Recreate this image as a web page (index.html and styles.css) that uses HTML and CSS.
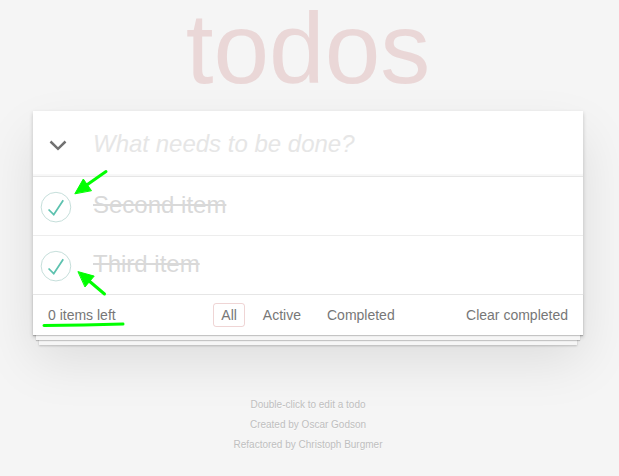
FILE: index.html
```html
<!DOCTYPE html>
<html lang="en">
<head>
<meta charset="utf-8">
<title>todos</title>
<link rel="stylesheet" href="styles.css">
</head>
<body>
<div class="page">
  <h1 class="title">todos</h1>
  <section class="todoapp">
    <header class="header">
      <span class="toggle-all"><svg width="18" height="11" viewBox="0 0 18 11"><polyline points="1.5,1.5 9,8.8 16.5,1.5" fill="none" stroke="#717171" stroke-width="2.5"/></svg></span>
      <input class="new-todo" placeholder="What needs to be done?">
    </header>
    <ul class="todo-list">
      <li class="todo completed">
        <svg class="toggle" width="40" height="40" viewBox="-10 -18 100 135"><circle cx="50" cy="50" r="50" fill="none" stroke="#bddad5" stroke-width="3"/><path fill="#5dc2af" d="M72 25L42 71 27 56l-4 4 20 20 34-52z"/></svg>
        <label class="todo-label">Second item</label>
      </li>
      <li class="todo completed">
        <svg class="toggle" width="40" height="40" viewBox="-10 -18 100 135"><circle cx="50" cy="50" r="50" fill="none" stroke="#bddad5" stroke-width="3"/><path fill="#5dc2af" d="M72 25L42 71 27 56l-4 4 20 20 34-52z"/></svg>
        <label class="todo-label">Third item</label>
      </li>
    </ul>
    <footer class="footer">
      <span class="todo-count">0 items left</span>
      <ul class="filters">
        <li><a class="filter selected">All</a></li>
        <li><a class="filter">Active</a></li>
        <li><a class="filter">Completed</a></li>
      </ul>
      <span class="clear-completed">Clear completed</span>
    </footer>
  </section>
  <footer class="info">
    <p>Double-click to edit a todo</p>
    <p>Created by Oscar Godson</p>
    <p>Refactored by Christoph Burgmer</p>
  </footer>
</div>
<svg class="annotations" width="619" height="476" viewBox="0 0 619 476">
  <g fill="#00ff00" stroke="#00ff00" stroke-linecap="round" stroke-linejoin="round">
    <line x1="106" y1="171.5" x2="86" y2="185.5" stroke-width="3"/>
    <polygon points="75,193.5 83.3,179 91.3,190.4" stroke-width="1"/>
    <line x1="104.5" y1="294" x2="88" y2="280" stroke-width="3"/>
    <polygon points="78.3,271.7 94.2,276.1 85.2,286.7" stroke-width="1"/>
    <path d="M44 325.5 Q 84 325 123 324" fill="none" stroke-width="3"/>
  </g>
</svg>
</body>
</html>
```

FILE: styles.css
```css
* {
  box-sizing: content-box;
}

html, body {
  margin: 0;
  padding: 0;
}

body {
  background: #f5f5f5;
  color: #4d4d4d;
  font: 14px "Liberation Sans", Arial, sans-serif;
  font-weight: 300;
  line-height: 1.4em;
  width: 619px;
  height: 476px;
  overflow: hidden;
}

.page {
  width: 550px;
  margin-left: 33px;
}

.title {
  margin: 0 0 15px 0;
  height: 96px;
  line-height: 96px;
  font-size: 100px;
  font-weight: 100;
  text-align: center;
  color: rgba(175, 47, 47, 0.15);
}

.todoapp {
  background: #fff;
  box-shadow: 0 2px 4px 0 rgba(0, 0, 0, 0.2), 0 25px 50px 0 rgba(0, 0, 0, 0.1);
}

.header {
  display: flex;
  align-items: center;
  height: 65px;
  box-shadow: inset 0 -2px 1px rgba(0, 0, 0, 0.03);
  border-bottom: 1px solid #e6e6e6;
}

.toggle-all {
  width: 44px;
  padding-left: 16px;
  display: flex;
  align-items: center;
  margin-top: 3px;
}

.toggle-all svg {
  display: block;
}

.new-todo {
  flex: 1;
  height: 65px;
  padding: 0 16px 0 0;
  margin: 0;
  border: none;
  outline: none;
  background: transparent;
  font: italic 300 24px "Liberation Sans", Arial, sans-serif;
  color: #4d4d4d;
}

.new-todo::placeholder {
  color: #e6e6e6;
  font-style: italic;
}

.todo-list {
  list-style: none;
  margin: 0;
  padding: 0;
}

.todo {
  display: flex;
  align-items: center;
  height: 58px;
  border-bottom: 1px solid #ededed;
}

.todo:last-child {
  border-bottom: none;
}

.toggle {
  display: block;
  flex: none;
  margin-top: 1px;
}

.todo-label {
  margin-left: 20px;
  padding-bottom: 2px;
  font-size: 24px;
  line-height: 28px;
  color: #d9d9d9;
  text-decoration: line-through;
}

.footer {
  display: grid;
  grid-template-columns: 1fr auto 1fr;
  align-items: center;
  height: 20px;
  line-height: 20px;
  padding: 10px 15px;
  color: #777;
  border-top: 1px solid #e6e6e6;
  box-shadow: 0 1px 1px rgba(0, 0, 0, 0.2),
    0 8px 0 -3px #f6f6f6,
    0 9px 1px -3px rgba(0, 0, 0, 0.2),
    0 16px 0 -6px #f6f6f6,
    0 17px 2px -6px rgba(0, 0, 0, 0.2);
}

.todo-count {
  justify-self: start;
}

.filters {
  list-style: none;
  margin: 0;
  padding: 0;
  display: flex;
  gap: 10px;
}

.filter {
  color: inherit;
  padding: 3px 7px;
  border: 1px solid transparent;
  border-radius: 3px;
}

.filter.selected {
  border-color: rgba(175, 47, 47, 0.2);
}

.clear-completed {
  justify-self: end;
}

.info {
  margin-top: 65px;
  color: #bfbfbf;
  font-size: 10px;
  text-shadow: 0 1px 0 rgba(255, 255, 255, 0.5);
  text-align: center;
}

.info p {
  margin: 0 0 10px 0;
  line-height: 1;
}

.annotations {
  position: absolute;
  left: 0;
  top: 0;
  pointer-events: none;
}
```
